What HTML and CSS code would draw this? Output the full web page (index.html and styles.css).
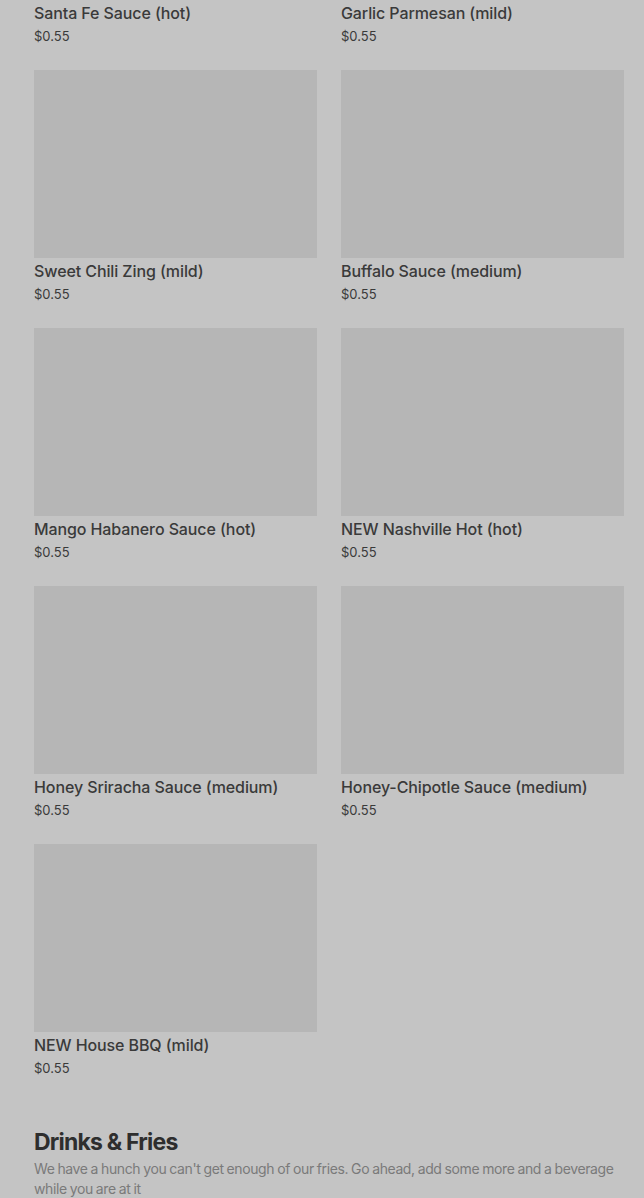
FILE: index.html
```html
<!DOCTYPE html>
<html>

<head>
  <meta charset="utf-8">
  <meta name="viewport" content="width=device-width">
  <title>Menu</title>
  <link rel="stylesheet" href="styles.css">
</head>

<body>
  <div class="menu">
    <div class="items">
      <div class="item">
        <div class="thumb"></div>
        <div class="name">Santa Fe Sauce (hot)</div>
        <div class="price">$0.55</div>
      </div>
      <div class="item">
        <div class="thumb"></div>
        <div class="name">Garlic Parmesan (mild)</div>
        <div class="price">$0.55</div>
      </div>
      <div class="item">
        <div class="thumb"></div>
        <div class="name">Sweet Chili Zing (mild)</div>
        <div class="price">$0.55</div>
      </div>
      <div class="item">
        <div class="thumb"></div>
        <div class="name">Buffalo Sauce (medium)</div>
        <div class="price">$0.55</div>
      </div>
      <div class="item">
        <div class="thumb"></div>
        <div class="name">Mango Habanero Sauce (hot)</div>
        <div class="price">$0.55</div>
      </div>
      <div class="item">
        <div class="thumb"></div>
        <div class="name">NEW Nashville Hot (hot)</div>
        <div class="price">$0.55</div>
      </div>
      <div class="item">
        <div class="thumb"></div>
        <div class="name">Honey Sriracha Sauce (medium)</div>
        <div class="price">$0.55</div>
      </div>
      <div class="item">
        <div class="thumb"></div>
        <div class="name">Honey-Chipotle Sauce (medium)</div>
        <div class="price">$0.55</div>
      </div>
      <div class="item">
        <div class="thumb"></div>
        <div class="name">NEW House BBQ (mild)</div>
        <div class="price">$0.55</div>
      </div>
    </div>

    <div class="section">
      <h2>Drinks &amp; Fries</h2>
      <p>We have a hunch you can't get enough of our fries. Go ahead, add some more and a beverage while you are at it</p>
    </div>
  </div>
</body>
</html>
```

FILE: styles.css
```css
html {
  background-color: #c4c4c4;
}

body {
  font-family: Inter, "Noto Sans", sans-serif;
  margin: 0;
  padding: 0;
  color: #3a3a3a;
}

.menu {
  padding: 0 20px 0 34px;
  margin-top: -188px;
}

.items {
  display: grid;
  grid-template-columns: 1fr 1fr;
  column-gap: 24px;
}

.item {
  margin-bottom: 24px;
}

.thumb {
  height: 188px;
  background-color: #b6b6b6;
}

.name {
  font-size: 16px;
  font-weight: 500;
  line-height: 24px;
  padding-top: 1px;
  letter-spacing: -0.1px;
}

.price {
  font-size: 13px;
  line-height: 20px;
  margin-top: 1px;
}

.section {
  padding-top: 24px;
}

.section h2 {
  margin: 0;
  font-size: 23px;
  font-weight: 700;
  line-height: 32px;
  letter-spacing: -0.8px;
  color: #2e2e2e;
}

.section p {
  margin: 1px 0 0;
  font-size: 14px;
  line-height: 20px;
  color: #7a7a7a;
  letter-spacing: -0.4px;
  word-spacing: -0.5px;
}
```
